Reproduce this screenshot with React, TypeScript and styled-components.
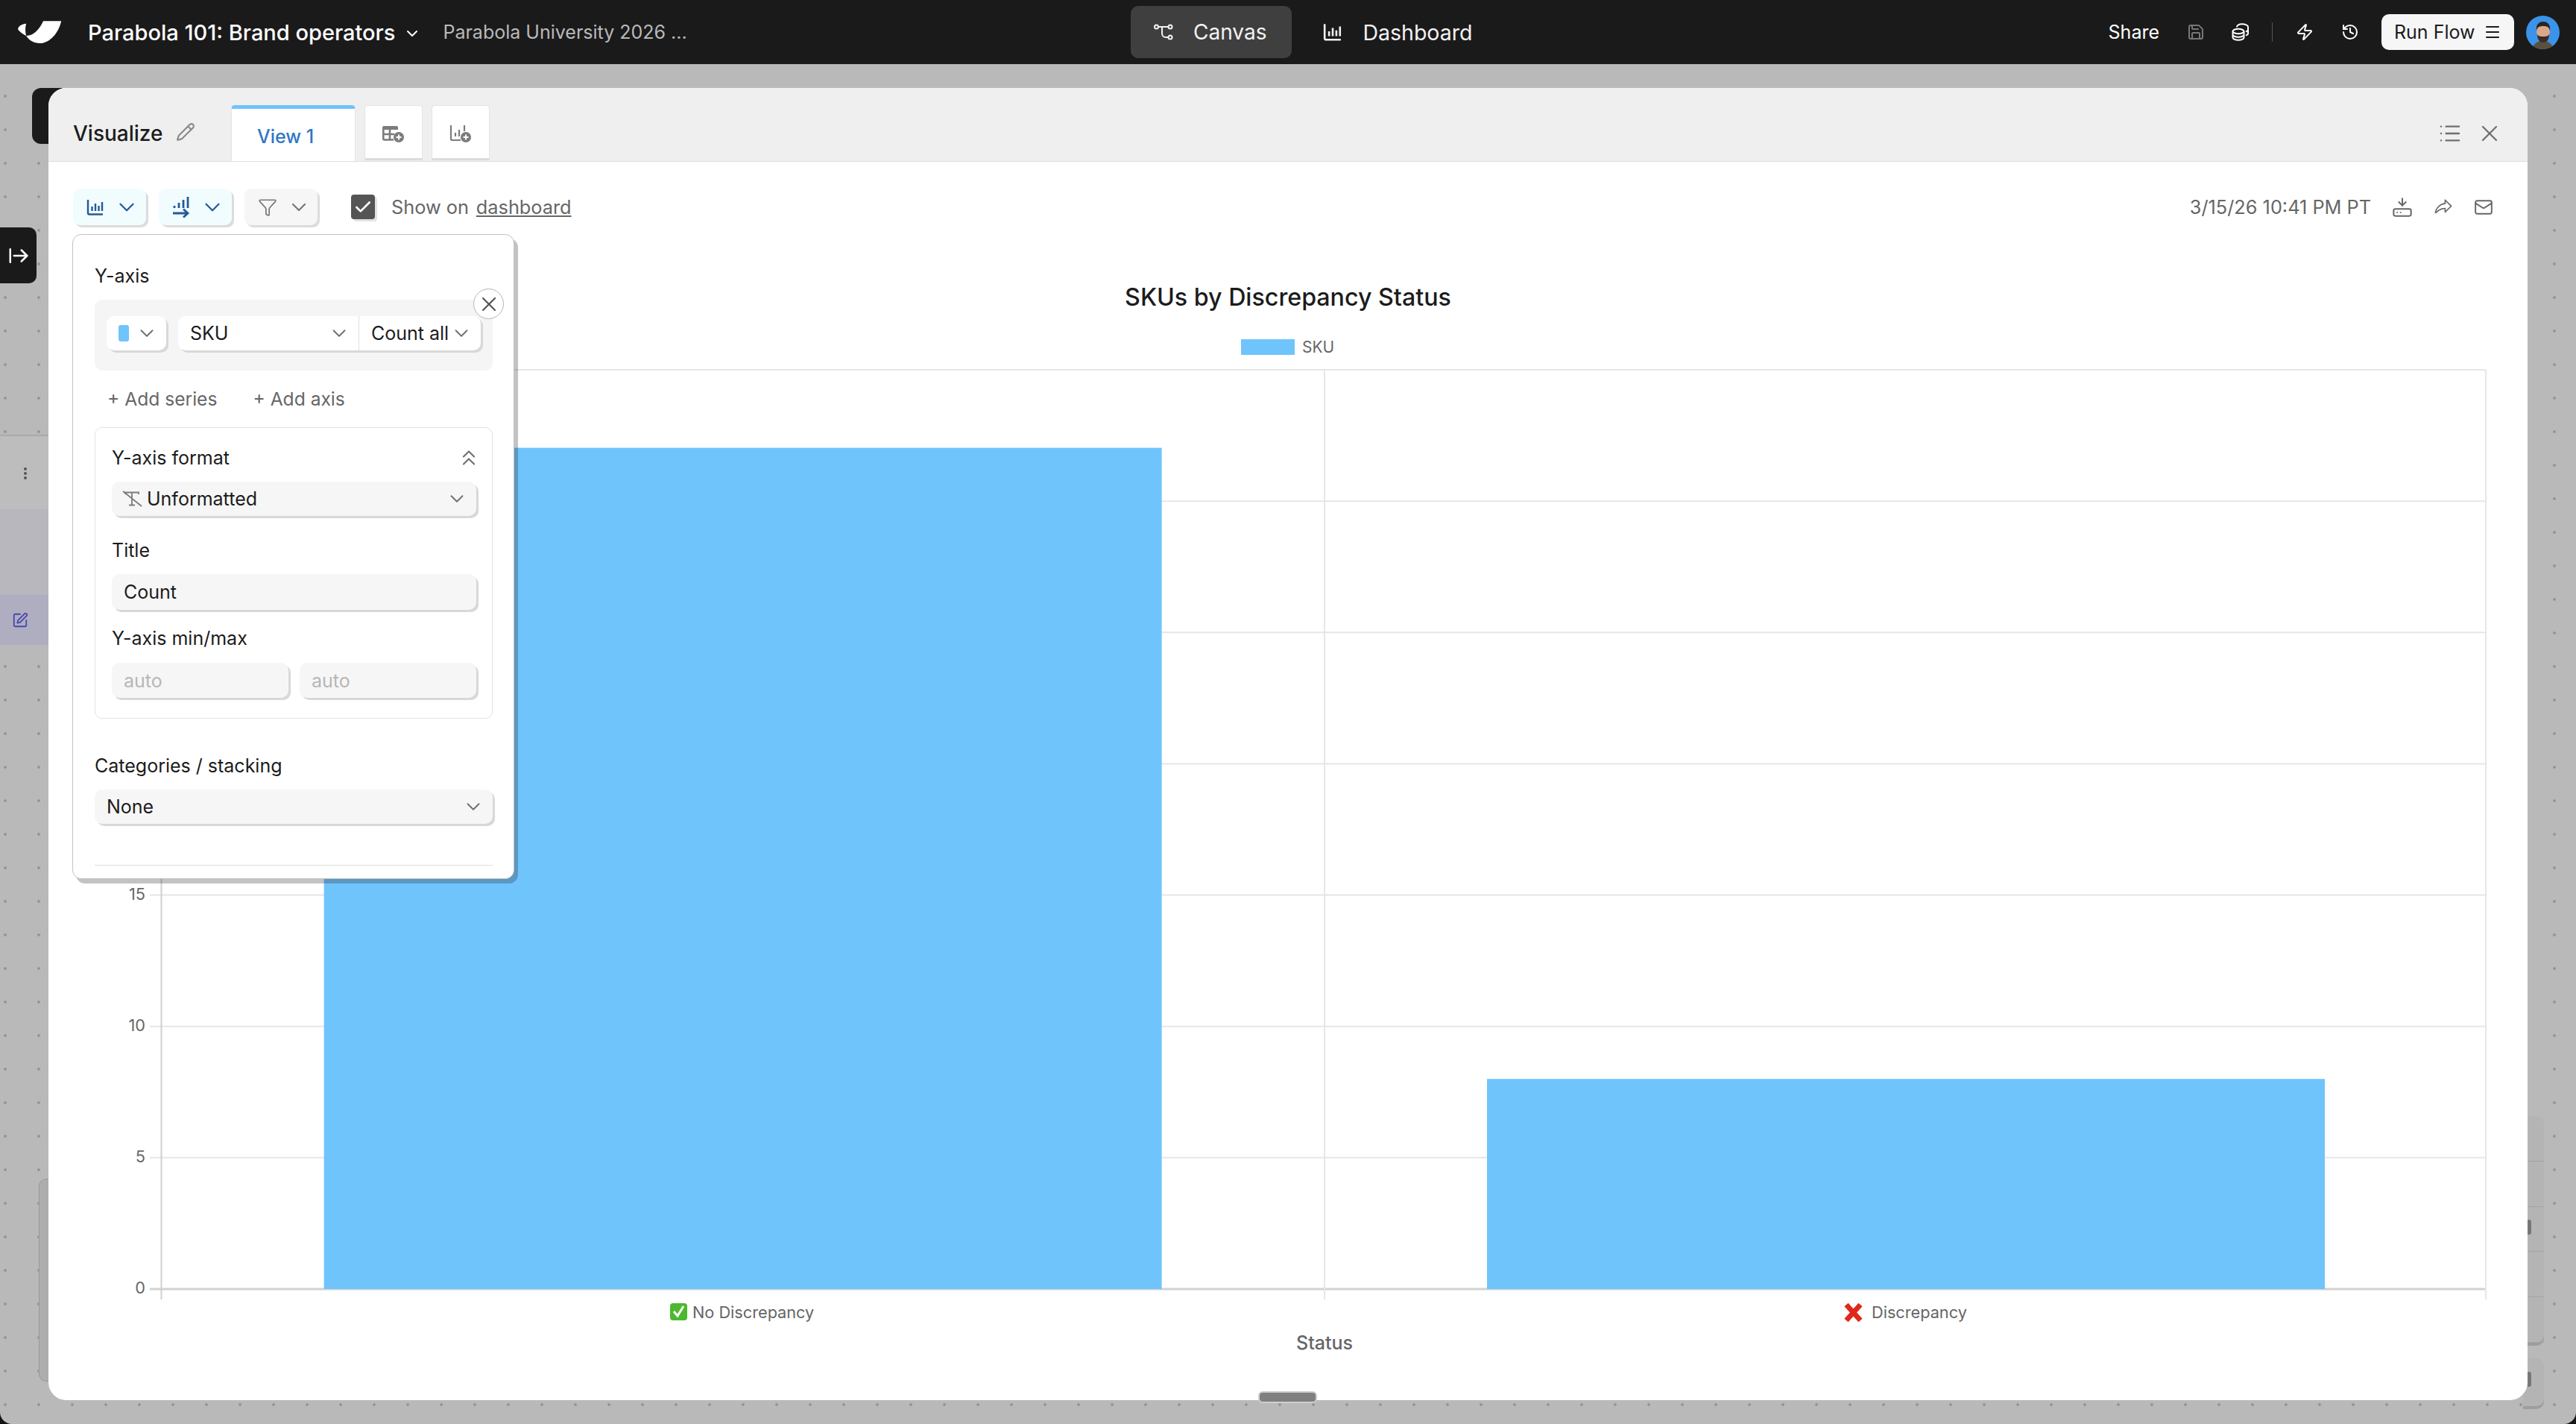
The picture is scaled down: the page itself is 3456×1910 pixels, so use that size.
import React from 'react';
import styled, { createGlobalStyle } from 'styled-components';
import {
  ArrowRightFromLine,
  Check,
  ChevronDown,
  ChevronsUp,
  Filter,
  HardDriveDownload,
  History,
  List,
  Mail,
  Menu,
  Pencil,
  Save,
  SquarePen,
  X,
  Zap,
} from 'lucide-react';
import { PiShareFat } from 'react-icons/pi';

const GlobalStyle = createGlobalStyle`
  html, body {
    margin: 0;
    padding: 0;
    background: #141414;
  }
  * {
    box-sizing: border-box;
  }
  body {
    font-family: Inter, "Liberation Sans", sans-serif;
    color: #1c1c1c;
  }
`;

const Page = styled.div`
  width: 3456px;
  height: 1910px;
  display: flex;
  flex-direction: column;
  overflow: hidden;
  border-radius: 0 0 16px 16px;
`;

const TopBar = styled.header`
  flex: 0 0 86px;
  display: flex;
  align-items: center;
  background: #1b1a1b;
  color: #fff;
`;

const BrandGroup = styled.div`
  flex: 0 0 1517px;
  display: flex;
  align-items: center;
  padding-left: 22px;
`;

const Logo = styled.svg`
  width: 62px;
  height: 32px;
  margin-right: 34px;
`;

const FlowName = styled.span`
  font-size: 29px;
  font-weight: 500;
  white-space: nowrap;
`;

const TitleChevron = styled(ChevronDown)`
  margin: 4px 0 0 11px;
  color: #fff;
`;

const FolderName = styled.span`
  margin-left: 29px;
  font-size: 25px;
  color: #b9b9b9;
  white-space: nowrap;
`;

const ViewSwitch = styled.nav`
  display: flex;
  align-items: center;
`;

const ViewButton = styled.div<{ $active?: boolean }>`
  display: flex;
  align-items: center;
  gap: 27px;
  height: 70px;
  padding: 0 34px 0 31px;
  margin-right: ${(p) => (p.$active ? '11px' : '0')};
  border-radius: 10px;
  font-size: ${(p) => (p.$active ? '28px' : '28.5px')};
  background: ${(p) => (p.$active ? '#3f3f40' : 'transparent')};
  color: #f2f2f2;
`;

const BarActions = styled.div`
  margin-left: auto;
  display: flex;
  align-items: center;
  height: 100%;
`;

const ShareLabel = styled.span`
  font-size: 25px;
  color: #fff;
  margin-right: 37px;
`;

const BarIcon = styled.span<{ $dim?: boolean; $gap?: number }>`
  display: flex;
  color: ${(p) => (p.$dim ? '#777' : '#fff')};
  margin-right: ${(p) => p.$gap ?? 0}px;
`;

const BarDivider = styled.span`
  width: 1px;
  height: 26px;
  background: #555;
  margin-right: 31px;
`;

const RunButton = styled.div`
  display: flex;
  align-items: center;
  width: 178px;
  height: 48px;
  padding: 0 17px;
  border-radius: 10px;
  background: #f6f6f6;
  color: #1c1c1c;
  font-size: 25px;
  justify-content: space-between;
`;

const Avatar = styled.svg`
  width: 45px;
  height: 45px;
  margin: 0 22px 0 16px;
`;

const Stage = styled.main`
  position: relative;
  flex: 1;
  padding: 32px 65px;
  background-color: #b9b9b9;
  background-image: radial-gradient(circle, #8f8f8f 1.6px, transparent 2.2px);
  background-size: 45px 45px;
  background-position: -15.5px 20.5px;
`;

/* things sitting on the flow canvas behind the open modal */
const NodeTab = styled.div`
  position: absolute;
  left: 43px;
  top: 32px;
  width: 40px;
  height: 75px;
  background: #1b1a1b;
  border-radius: 12px 0 0 12px;
`;

const SidebarToggle = styled.div`
  position: absolute;
  left: 0;
  top: 219px;
  width: 49px;
  height: 75px;
  display: flex;
  align-items: center;
  justify-content: center;
  background: #1b1a1b;
  color: #fff;
  border-radius: 0 10px 10px 0;
`;

const GhostNode = styled.div`
  position: absolute;
  left: 0;
  top: 497px;
  width: 65px;
  height: 282px;
  background: #bdbdbd;
  border-top: 2px solid #aaa;
  border-bottom: 2px solid #aaa;
`;

const GhostDots = styled.div`
  height: 98px;
  padding: 42px 0 0 32px;
  font-size: 0;
  &::before {
    content: '';
    display: block;
    width: 4px;
    height: 4px;
    border-radius: 50%;
    background: #555;
    box-shadow: 0 6px 0 #555, 0 12px 0 #555;
  }
`;

const GhostStep = styled.div`
  height: 182px;
  background: #b7b7bd;
  padding-top: 115px;
`;

const GhostStepRow = styled.div`
  height: 67px;
  background: #aeaec0;
  padding: 23px 0 0 16px;
  color: #4a48ad;
  display: flex;
`;

const GhostCardLeft = styled.div`
  position: absolute;
  left: 52px;
  top: 1495px;
  width: 20px;
  height: 272px;
  background: #adadad;
  border: 1px solid #999;
  border-radius: 10px 0 0 10px;
`;

const GhostColumn = styled.div`
  position: absolute;
  left: 3385px;
  top: 1411px;
  width: 28px;
  height: 304px;
  display: flex;
  flex-direction: column;
  background: #b4b4b4;
  border-radius: 0 10px 10px 0;
  box-shadow: 0 4px 0 #9d9d9d;
  & > div {
    flex: 1;
    border-bottom: 1px solid #a4a4a4;
  }
`;

const GhostFooter = styled.div`
  position: absolute;
  left: 3385px;
  top: 1736px;
  width: 28px;
  height: 64px;
  background: #b4b4b4;
  border-radius: 0 10px 10px 0;
  box-shadow: 0 4px 0 #9d9d9d;
`;

const GhostMark = styled.div<{ $top: number; $height: number }>`
  position: absolute;
  left: 3391px;
  top: ${(p) => p.$top}px;
  width: 5px;
  height: ${(p) => p.$height}px;
  background: #777;
  border-radius: 0 3px 3px 0;
`;

const Modal = styled.section`
  position: relative;
  height: 1760px;
  display: flex;
  flex-direction: column;
  background: #fff;
  border-radius: 24px;
`;

const ResizeHandle = styled.div`
  position: absolute;
  left: 1623px;
  bottom: -4px;
  width: 79px;
  height: 16px;
  border-radius: 6px;
  background: #808080;
  border: 2px solid #cfcfcf;
`;

const ModalHeader = styled.div`
  flex: 0 0 97px;
  display: flex;
  padding: 23px 33px 0 33px;
  background: #efefef;
  border-radius: 24px 24px 0 0;
  border-bottom: 1px solid #dedede;
`;

const HeaderTitle = styled.div`
  flex: 0 0 212px;
  display: flex;
  align-items: center;
  gap: 18px;
  font-size: 28px;
  font-weight: 500;
  color: #1c1c1c;
`;

const HeaderPencil = styled(Pencil)`
  color: #8a8a8a;
  margin-top: -4px;
`;

const ActiveTab = styled.div`
  height: 75px;
  width: 167px;
  padding: 4px 0 0 34px;
  display: flex;
  align-items: center;
  background: #fff;
  border: 1px solid #e3e3e3;
  border-width: 0 1px;
  border-top: 5px solid #6fc3fb;
  border-radius: 5px 5px 0 0;
  font-size: 25px;
  font-weight: 500;
  color: #2f77c4;
`;

const IconTab = styled.div`
  height: 74px;
  width: 78px;
  margin-left: 12px;
  display: flex;
  align-items: center;
  justify-content: center;
  padding-top: 4px;
  background: #fff;
  border: 1px solid #e3e3e3;
  border-bottom: 3px solid #dcdcdc;
  border-radius: 5px 5px 0 0;
  color: #7c7c7c;
`;

const HeaderActions = styled.div`
  margin-left: auto;
  display: flex;
  align-items: center;
  gap: 19px;
  color: #6f6f6f;
`;

const ModalBody = styled.div`
  position: relative;
  flex: 1;
  display: flex;
  flex-direction: column;
`;

const Toolbar = styled.div`
  display: flex;
  align-items: center;
  padding: 36px 46px 0 33px;
`;

const ToolButton = styled.div<{ $muted?: boolean }>`
  width: 98px;
  height: 49px;
  margin-right: 17px;
  padding-left: 18px;
  display: flex;
  align-items: center;
  gap: 13px;
  border-radius: 9px;
  background: ${(p) => (p.$muted ? '#f6f6f6' : '#f1fcff')};
  box-shadow: 3px 3px 0 #dcdcdc;
  color: ${(p) => (p.$muted ? '#777' : '#235a96')};
`;

const ToolChevron = styled(ChevronDown)`
  flex: none;
`;

const ShowToggle = styled.div`
  width: 32px;
  height: 33px;
  margin: 0 22px 0 28px;
  display: flex;
  align-items: center;
  justify-content: center;
  border-radius: 4px;
  background: #555;
  color: #fff;
  box-shadow: 3px 3px 0 #e2e2e2;
`;

const ShowLabel = styled.span`
  font-size: 25.3px;
  color: #666;
  white-space: nowrap;
`;

const DashboardLink = styled.span`
  margin-left: 10px;
  text-decoration: underline;
`;

const ExportGroup = styled.div`
  margin-left: auto;
  display: flex;
  align-items: center;
  gap: 28px;
  color: #666;
`;

const Timestamp = styled.span`
  font-size: 25.3px;
  color: #666;
  white-space: nowrap;
`;

const ChartTitle = styled.h2`
  margin: 72px 0 0;
  text-align: center;
  line-height: 50px;
  font-size: 32.2px;
  font-weight: 500;
  color: #1c1c1c;
`;

const Legend = styled.div`
  margin-top: 31px;
  height: 21px;
  display: flex;
  align-items: center;
  padding-left: 1600px;
  gap: 10px;
  font-size: 21px;
  color: #666;
`;

const LegendSwatch = styled.span`
  width: 72px;
  height: 21px;
  background: #70c4fc;
`;

const ChartCanvas = styled.svg`
  display: block;
  margin-top: 16px;
  width: 3326px;
  height: 1350px;
`;

const TickLabel = styled.text`
  font-size: 21.7px;
  fill: #666;
  dominant-baseline: central;
`;

const AxisTitle = styled.text`
  font-size: 25px;
  font-weight: 500;
  fill: #666;
  dominant-baseline: central;
  text-anchor: middle;
`;

const Popover = styled.aside`
  position: absolute;
  left: 32px;
  top: 97px;
  width: 593px;
  height: 865px;
  padding: 40px 28px 0 29px;
  background: #fff;
  border: 1px solid #c3c3c3;
  border-radius: 12px;
  box-shadow: 5px 6px 0 rgba(40, 40, 40, 0.28);
`;

const SectionLabel = styled.div<{ $top?: number }>`
  margin-top: ${(p) => p.$top ?? 0}px;
  height: 30px;
  line-height: 30px;
  font-size: 25px;
  color: #1c1c1c;
`;

const SeriesBox = styled.div`
  position: relative;
  height: 95px;
  margin-top: 17px;
  padding: 22px 16px;
  display: flex;
  gap: 16px;
  background: #f5f5f5;
  border-radius: 10px;
`;

const RemoveSeries = styled.div`
  position: absolute;
  top: -15px;
  right: -15px;
  width: 41px;
  height: 41px;
  display: flex;
  align-items: center;
  justify-content: center;
  background: #fff;
  border: 1px solid #b5b5b5;
  border-radius: 50%;
  color: #555;
`;

const Select = styled.div<{ $width?: number; $tone?: 'white' | 'grey'; $flush?: 'left' | 'right' }>`
  width: ${(p) => (p.$width ? `${p.$width}px` : 'auto')};
  flex: ${(p) => (p.$width ? 'none' : '1')};
  height: 46px;
  display: flex;
  align-items: center;
  justify-content: space-between;
  padding: 0 11px 0 16px;
  font-size: 25px;
  background: ${(p) => (p.$tone === 'grey' ? '#f6f6f6' : '#fff')};
  border-radius: ${(p) =>
    p.$flush === 'left' ? '10px 0 0 10px' : p.$flush === 'right' ? '0 10px 10px 0' : '10px'};
  border-left: ${(p) => (p.$flush === 'right' ? '1px solid #e0e0e0' : '0')};
  box-shadow: 3px 3px 0 #d8d8d8;
  color: #1c1c1c;
  white-space: nowrap;
`;

const ColorChip = styled.span`
  width: 14px;
  height: 22px;
  border-radius: 3px;
  background: #70c4fc;
`;

const FieldPair = styled.div`
  flex: 1;
  display: flex;
`;

const AddRow = styled.div`
  margin-top: 23px;
  height: 30px;
  padding-left: 17px;
  display: flex;
  align-items: center;
  gap: 48px;
  font-size: 24.6px;
  color: #666;
`;

const FormatCard = styled.div`
  margin-top: 23px;
  height: 391px;
  padding: 25px 21px 0 22px;
  border: 1px solid #e3e3e3;
  border-radius: 10px;
`;

const CardHead = styled.div`
  height: 30px;
  display: flex;
  align-items: center;
  justify-content: space-between;
  font-size: 25px;
  color: #1c1c1c;
`;

const CollapseIcon = styled(ChevronsUp)`
  margin-right: -7px;
  color: #6f6f6f;
`;

const FieldStack = styled.div<{ $top: number; $height?: number }>`
  margin-top: ${(p) => p.$top}px;
  height: ${(p) => p.$height ?? 47}px;
  display: flex;
  gap: 15px;
`;

const TextInput = styled.div<{ $placeholder?: boolean }>`
  flex: 1;
  display: flex;
  align-items: center;
  padding: 0 16px;
  font-size: 25px;
  background: #f6f6f6;
  border-radius: 10px;
  box-shadow: 3px 3px 0 #d8d8d8;
  color: ${(p) => (p.$placeholder ? '#b7b7b7' : '#1c1c1c')};
`;

const FormatValue = styled.span`
  display: flex;
  align-items: center;
  gap: 6px;
  margin-left: -2px;
`;

const PopoverRule = styled.hr`
  margin: 54px 0 0;
  border: 0;
  border-top: 1px solid #dcdcdc;
`;

const Chevron = styled(ChevronDown)`
  color: #6f6f6f;
  flex: none;
`;

const AXIS_TOP = 494;
const AXIS_BOTTOM = 1727;
const AXIS_LEFT = 216.5;
const AXIS_RIGHT = 3335;
const AXIS_MID = 1777;
const UNIT = (AXIS_BOTTOM - AXIS_TOP) / 35;
const ticks = [0, 5, 10, 15, 20, 25, 30, 35];

const bars = [
  { x: 434.6, width: 1124, value: 32.03 },
  { x: 1995, width: 1124, value: 8 },
];

function BarsIcon({ size = 24 }: { size?: number }) {
  return (
    <svg width={size} height={size} viewBox="0 0 24 24" fill="none" stroke="currentColor" strokeWidth="2.4">
      <path d="M2 2v17.5a2 2 0 0 0 2 2h18" />
      <path d="M7.500 11v6M12 7v10M16.500 10v7M21 5v12" />
    </svg>
  );
}

function SortBarsIcon() {
  return (
    <svg width="24" height="30" viewBox="0 0 24 30" fill="none" stroke="currentColor" strokeWidth="2.8">
      <path d="M3 13v3M9 9v7M15 5v11M21 1v15" />
      <path d="M1 23h20M15 17.500l6 5.500-6 5.500" />
    </svg>
  );
}

function CanvasIcon() {
  return (
    <svg width="26" height="22" viewBox="0 0 26 22" fill="none" stroke="currentColor" strokeWidth="2">
      <circle cx="3.500" cy="4" r="2.500" />
      <circle cx="22" cy="4" r="2.500" />
      <circle cx="22" cy="18" r="2.500" />
      <path d="M6 4h13.500M11 4v9a5 5 0 0 0 5 5h3.500" />
    </svg>
  );
}

function CoinsIcon() {
  return (
    <svg width="24" height="24" viewBox="0 0 24 24" fill="none" stroke="#fff" strokeWidth="2">
      <ellipse cx="9" cy="11" rx="7.500" ry="3.200" />
      <path d="M1.500 11v8.500c0 1.800 3.400 3.200 7.500 3.200s7.500-1.400 7.500-3.200V11M1.500 15.500c0 1.800 3.400 3.200 7.500 3.200s7.500-1.400 7.500-3.200" />
      <path d="M7 5.500C7 3 10 1.300 14 1.300s8 1.500 8 3.700v9c0 1-1.200 2-3 2.600M19 11.500c1.800-.6 3-1.500 3-2.600" />
    </svg>
  );
}

function TableAddIcon() {
  return (
    <svg width="30" height="24" viewBox="0 0 30 24" fill="none">
      <path d="M2 2h17a2 2 0 0 1 2 2v3H0V4a2 2 0 0 1 2-2z" fill="currentColor" />
      <path d="M1.300 6v13a1.500 1.500 0 0 0 1.500 1.500H15M1.300 13H16M10 6v14" stroke="currentColor" strokeWidth="2.600" />
      <circle cx="22" cy="17" r="7" fill="currentColor" />
      <path d="M22 13.500v7M18.500 17h7" stroke="#fff" strokeWidth="2" />
    </svg>
  );
}

function ChartAddIcon() {
  return (
    <svg width="30" height="24" viewBox="0 0 30 24" fill="none">
      <path d="M2 1v18a2 2 0 0 0 2 2h11" stroke="currentColor" strokeWidth="2.200" />
      <path d="M8 11v5M13 7v9M20 1v8" stroke="currentColor" strokeWidth="2.200" />
      <circle cx="22" cy="17" r="7" fill="currentColor" />
      <path d="M22 13.500v7M18.500 17h7" stroke="#fff" strokeWidth="2" />
    </svg>
  );
}

function UnformattedIcon() {
  return (
    <svg width="27" height="22" viewBox="0 0 27 22" fill="none" stroke="#7c7c7c" strokeWidth="1.800">
      <path d="M4 5V2.500h18V5M13 2.500V19M9 19.500h8M1 1l25 20" />
    </svg>
  );
}

function ChartBody() {
  return (
    <ChartCanvas viewBox="65 490 3326 1350">
      {ticks.map((t) => (
        <g key={t}>
          <line
            x1={201}
            x2={AXIS_RIGHT}
            y1={AXIS_BOTTOM - t * UNIT}
            y2={AXIS_BOTTOM - t * UNIT}
            stroke={t === 0 ? '#d2d2d2' : '#e6e6e6'}
            strokeWidth={t === 0 ? 3 : 2}
          />
          {t <= 15 && (
            <TickLabel x={195} y={AXIS_BOTTOM - t * UNIT - 2} textAnchor="end">
              {t}
            </TickLabel>
          )}
        </g>
      ))}
      <line x1={AXIS_LEFT} x2={AXIS_LEFT} y1={AXIS_TOP} y2={1741} stroke="#cfcfcf" strokeWidth="2" />
      <line x1={AXIS_MID} x2={AXIS_MID} y1={AXIS_TOP} y2={1741} stroke="#e6e6e6" strokeWidth="2" />
      <line x1={AXIS_RIGHT} x2={AXIS_RIGHT} y1={AXIS_TOP} y2={1741} stroke="#e6e6e6" strokeWidth="2" />
      {bars.map((b) => (
        <rect
          key={b.x}
          x={b.x}
          y={AXIS_BOTTOM - b.value * UNIT}
          width={b.width}
          height={b.value * UNIT}
          fill="#70c4fc"
        />
      ))}
      <rect x={899} y={1746} width={23} height={23} rx={4} fill="#4cb82e" />
      <path d="M904 1757l5 6 8-13" fill="none" stroke="#fff" strokeWidth="3" />
      <TickLabel x={929} y={1758}>
        No Discrepancy
      </TickLabel>
      <path d="M2477 1748l19 21M2496 1748l-19 21" stroke="#e0281c" strokeWidth="7" />
      <TickLabel x={2511} y={1758}>
        Discrepancy
      </TickLabel>
      <AxisTitle x={AXIS_MID} y={1799}>
        Status
      </AxisTitle>
    </ChartCanvas>
  );
}

function YAxisPopover() {
  return (
    <Popover>
      <SectionLabel>Y-axis</SectionLabel>
      <SeriesBox>
        <Select $width={80}>
          <ColorChip />
          <Chevron size={30} strokeWidth={1.5} />
        </Select>
        <FieldPair>
          <Select $flush="left">
            SKU
            <Chevron size={30} strokeWidth={1.5} />
          </Select>
          <Select $width={164} $flush="right">
            Count all
            <Chevron size={30} strokeWidth={1.5} />
          </Select>
        </FieldPair>
        <RemoveSeries>
          <X size={32} strokeWidth={1.6} />
        </RemoveSeries>
      </SeriesBox>
      <AddRow>
        <span>+ Add series</span>
        <span>+ Add axis</span>
      </AddRow>
      <FormatCard>
        <CardHead>
          Y-axis format
          <CollapseIcon size={34} strokeWidth={1.5} />
        </CardHead>
        <FieldStack $top={17}>
          <Select $tone="grey">
            <FormatValue>
              <UnformattedIcon />
              Unformatted
            </FormatValue>
            <Chevron size={30} strokeWidth={1.5} />
          </Select>
        </FieldStack>
        <SectionLabel $top={30}>Title</SectionLabel>
        <FieldStack $top={17} $height={48}>
          <TextInput>Count</TextInput>
        </FieldStack>
        <SectionLabel $top={23}>Y-axis min/max</SectionLabel>
        <FieldStack $top={18}>
          <TextInput $placeholder>auto</TextInput>
          <TextInput $placeholder>auto</TextInput>
        </FieldStack>
      </FormatCard>
      <SectionLabel $top={48}>Categories / stacking</SectionLabel>
      <FieldStack $top={17}>
        <Select $tone="grey">
          None
          <Chevron size={30} strokeWidth={1.5} />
        </Select>
      </FieldStack>
      <PopoverRule />
    </Popover>
  );
}

export default function App() {
  return (
    <>
      <GlobalStyle />
      <Page>
        <TopBar>
          <BrandGroup>
            <Logo viewBox="34 48 190 102">
              <path d="M145 52L222 52C212 100 175 147 130 147C105 147 85 135 72 115C105 115 130 85 145 52Z" fill="#fff" />
              <path d="M72 63C50 65 37 75 37 88C45 100 58 108 72 115C68 98 67 80 72 63Z" fill="#fff" />
            </Logo>
            <FlowName>Parabola 101: Brand operators</FlowName>
            <TitleChevron size={24} />
            <FolderName>Parabola University 2026 ...</FolderName>
          </BrandGroup>
          <ViewSwitch>
            <ViewButton $active>
              <CanvasIcon />
              Canvas
            </ViewButton>
            <ViewButton>
              <BarsIcon size={26} />
              Dashboard
            </ViewButton>
          </ViewSwitch>
          <BarActions>
            <ShareLabel>Share</ShareLabel>
            <BarIcon $dim $gap={36}>
              <Save size={24} />
            </BarIcon>
            <BarIcon $gap={30}>
              <CoinsIcon />
            </BarIcon>
            <BarDivider />
            <BarIcon $gap={37}>
              <Zap size={24} />
            </BarIcon>
            <BarIcon $gap={30}>
              <History size={24} />
            </BarIcon>
            <RunButton>
              Run Flow
              <Menu size={24} />
            </RunButton>
            <Avatar viewBox="0 0 45 45">
              <defs>
                <clipPath id="avatar-clip">
                  <circle cx="22.500" cy="22.500" r="22.500" />
                </clipPath>
              </defs>
              <g clipPath="url(#avatar-clip)">
                <rect width="45" height="45" fill="#3b93ea" />
                <path d="M8 45c2-8 8-11 14.500-11S35 37 37 45z" fill="#5a5040" />
                <ellipse cx="23" cy="22" rx="9" ry="12" fill="#d8a78c" />
                <path d="M14 20c-1-9 4-12 9-12s10 3 9 12c-1-4-3-6-9-6s-8 2-9 6z" fill="#2c2420" />
                <path d="M14.500 24c1 9 4 12 8.500 12s7.500-3 8.500-12c-1 3-3 4-8.500 4s-7.500-1-8.500-4z" fill="#3a2c26" />
              </g>
            </Avatar>
          </BarActions>
        </TopBar>
        <Stage>
          <NodeTab />
          <SidebarToggle>
            <ArrowRightFromLine size={30} />
          </SidebarToggle>
          <GhostNode>
            <GhostDots />
            <GhostStep>
              <GhostStepRow>
                <SquarePen size={22} />
              </GhostStepRow>
            </GhostStep>
          </GhostNode>
          <GhostCardLeft />
          <GhostColumn>
            <div />
            <div />
            <div />
            <div />
            <div />
          </GhostColumn>
          <GhostFooter />
          <Modal>
            <ModalHeader>
              <HeaderTitle>
                Visualize
                <HeaderPencil size={26} />
              </HeaderTitle>
              <ActiveTab>View 1</ActiveTab>
              <IconTab>
                <TableAddIcon />
              </IconTab>
              <IconTab>
                <ChartAddIcon />
              </IconTab>
              <HeaderActions>
                <List size={32} strokeWidth={1.8} />
                <X size={36} strokeWidth={1.5} />
              </HeaderActions>
            </ModalHeader>
            <ModalBody>
              <Toolbar>
                <ToolButton>
                  <BarsIcon size={24} />
                  <ToolChevron size={34} strokeWidth={1.6} />
                </ToolButton>
                <ToolButton>
                  <SortBarsIcon />
                  <ToolChevron size={34} strokeWidth={1.6} />
                </ToolButton>
                <ToolButton $muted>
                  <Filter size={26} strokeWidth={1.6} />
                  <ToolChevron size={32} strokeWidth={1.6} />
                </ToolButton>
                <ShowToggle>
                  <Check size={26} strokeWidth={2.5} />
                </ShowToggle>
                <ShowLabel>
                  Show on<DashboardLink>dashboard</DashboardLink>
                </ShowLabel>
                <ExportGroup>
                  <Timestamp>3/15/26 10:41 PM PT</Timestamp>
                  <HardDriveDownload size={28} strokeWidth={1.7} />
                  <PiShareFat size={26} />
                  <Mail size={26} strokeWidth={1.8} />
                </ExportGroup>
              </Toolbar>
              <ChartTitle>SKUs by Discrepancy Status</ChartTitle>
              <Legend>
                <LegendSwatch />
                SKU
              </Legend>
              <ChartBody />
              <YAxisPopover />
            </ModalBody>
            <ResizeHandle />
          </Modal>
          <GhostMark $top={1550} $height={20} />
          <GhostMark $top={1754} $height={20} />
        </Stage>
      </Page>
    </>
  );
}
